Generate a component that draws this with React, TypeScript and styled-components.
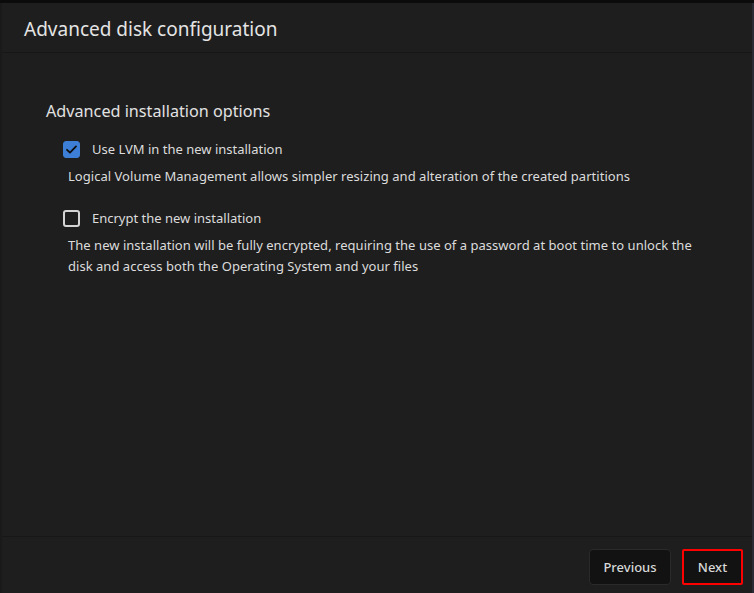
import React from "react";
import styled, { createGlobalStyle } from "styled-components";

const Global = createGlobalStyle`
  html, body { margin: 0; padding: 0; background: #1e1e1e; }
  body { font-family: "Noto Sans", "Open Sans", sans-serif; color: #dedede; }
  #root { width: 754px; height: 593px; }
`;

const Window = styled.div`
  width: 754px;
  height: 593px;
  display: flex;
  flex-direction: column;
  background: #1e1e1e;
  border-top: 3px solid #0b0b0b;
  box-sizing: border-box;
`;

const Body = styled.div`
  flex: 1;
  display: flex;
  flex-direction: column;
  border-left: 2px solid #1a1a1a;
  border-right: 2px solid #2b2b36;
  min-height: 0;
`;

const Header = styled.header`
  height: 50px;
  display: flex;
  align-items: center;
  padding-left: 22px;
  padding-top: 2px;
  border-bottom: 1px solid #171717;
  box-sizing: border-box;
`;

const Title = styled.h1`
  margin: 0;
  font-size: 19px;
  font-weight: 400;
  color: #e4e4e4;
  letter-spacing: 0;
`;

const Content = styled.main`
  flex: 1;
  padding: 47px 40px 0 44px;
  display: flex;
  flex-direction: column;
`;

const SectionTitle = styled.h2`
  margin: 0 0 17px 0;
  font-size: 16.2px;
  font-weight: 400;
  color: #e2e2e2;
  line-height: 22px;
`;

const Option = styled.div`
  display: flex;
  flex-direction: column;
  padding-left: 17px;
  margin-bottom: 21px;
`;

const CheckRow = styled.label`
  display: flex;
  align-items: center;
  gap: 12px;
  font-size: 13px;
  line-height: 20px;
  color: #dcdcdc;
`;

const Box = styled.span<{ $checked?: boolean }>`
  width: 17px;
  height: 17px;
  box-sizing: border-box;
  border-radius: 3px;
  display: inline-flex;
  align-items: center;
  justify-content: center;
  background: ${(p) => (p.$checked ? "#3d7ed6" : "transparent")};
  border: ${(p) => (p.$checked ? "1px solid #3d7ed6" : "2px solid #d4d4d4")};
`;

const Desc = styled.p`
  margin: 7px 0 0 5px;
  font-size: 13px;
  line-height: 21px;
  color: #dcdcdc;
  max-width: 640px;
  letter-spacing: 0.03px;
`;

const Footer = styled.footer`
  height: 57px;
  border-top: 1px solid #171717;
  display: flex;
  justify-content: flex-end;
  align-items: flex-start;
  padding: 12px 9px 0 0;
  gap: 11px;
  box-sizing: border-box;
`;

const Button = styled.button<{ $focused?: boolean }>`
  height: 36px;
  padding: 0 ${(p) => (p.$focused ? "13px" : "13px")};
  background: #121212;
  border: ${(p) => (p.$focused ? "2px solid #ff0000" : "1px solid #2a2a2a")};
  border-radius: ${(p) => (p.$focused ? "2px" : "4px")};
  color: #d8d8d8;
  font-family: "Noto Sans", sans-serif;
  font-size: 13px;
  font-weight: 500;
  min-width: ${(p) => (p.$focused ? "61px" : "82px")};
`;

const Check = () => (
  <svg width="13" height="13" viewBox="0 0 13 13">
    <path d="M2 6.8 L5 9.6 L11 3.4" fill="none" stroke="#0e0e0e" strokeWidth="1.8" strokeLinecap="round" strokeLinejoin="round" />
  </svg>
);

export default function App() {
  return (
    <>
      <Global />
      <Window>
        <Body>
          <Header>
            <Title>Advanced disk configuration</Title>
          </Header>
          <Content>
            <SectionTitle>Advanced installation options</SectionTitle>
            <Option>
              <CheckRow>
                <Box $checked>
                  <Check />
                </Box>
                Use LVM in the new installation
              </CheckRow>
              <Desc>Logical Volume Management allows simpler resizing and alteration of the created partitions</Desc>
            </Option>
            <Option>
              <CheckRow>
                <Box />
                Encrypt the new installation
              </CheckRow>
              <Desc>
                The new installation will be fully encrypted, requiring the use of a password at boot time to unlock the disk and access both the Operating System and your files
              </Desc>
            </Option>
          </Content>
          <Footer>
            <Button>Previous</Button>
            <Button $focused>Next</Button>
          </Footer>
        </Body>
      </Window>
    </>
  );
}
